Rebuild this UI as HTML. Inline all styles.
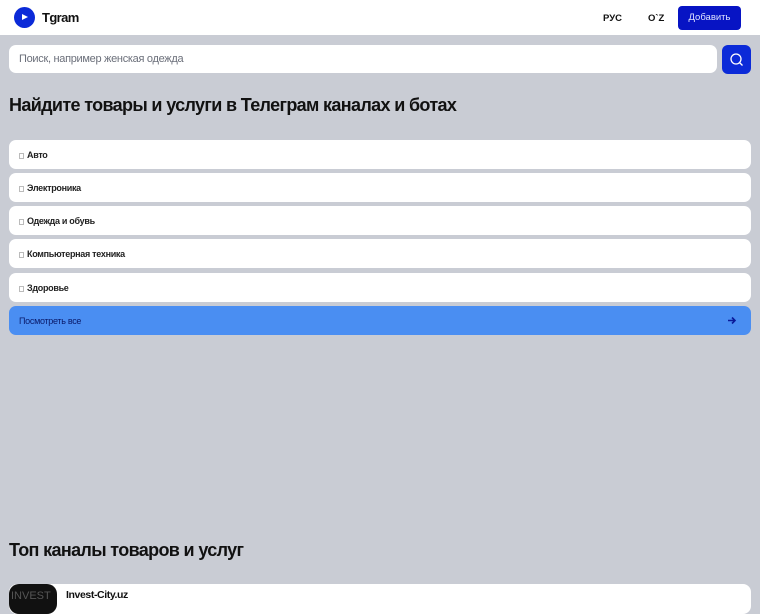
<!DOCTYPE html>
<html><head><meta charset="utf-8"><style>
*{box-sizing:border-box;margin:0;padding:0}
body{width:760px;height:600px;overflow:hidden;background:#c9ccd4;font-family:"Liberation Sans","Noto Sans CJK SC",sans-serif;color:#111}
.hdr{position:absolute;left:0;top:0;width:760px;height:35px;background:#fff}
.logo{position:absolute;left:14px;top:7px;width:21px;height:21px;border-radius:50%;background:#0b2ad8}
.logo:after{content:"";position:absolute;left:8px;top:7px;border-left:6px solid #fff;border-top:3.5px solid transparent;border-bottom:3.5px solid transparent}
.brand{position:absolute;left:42px;top:10px;font-weight:bold;font-size:13px;letter-spacing:-0.6px}
.lang{position:absolute;top:13px;font-size:9.5px;font-weight:bold}
.add{position:absolute;left:678px;top:6px;width:63px;height:24px;background:#0714c4;border-radius:4px;color:#dfe3ff;font-size:9.5px;text-align:center;line-height:24px}
.search{position:absolute;left:9px;top:45px;width:708px;height:28px;background:#fff;border-radius:7px;font-size:11px;color:#6b6f7a;padding:8px 10px;letter-spacing:-0.3px}
.sbtn{position:absolute;left:722px;top:45px;width:29px;height:29px;background:#0b2ad8;border-radius:6px}
h1{position:absolute;left:9px;top:95px;font-size:18px;font-weight:bold;letter-spacing:-0.65px;white-space:nowrap}
.it{position:absolute;left:9px;width:742px;height:29px;background:#fff;border-radius:7px;font-size:9px;font-weight:bold;padding:10px 10px 0;color:#222;letter-spacing:-0.3px}
.it span{display:inline-block;width:5px;height:6px;border:1px solid #bbb;margin-right:3px;vertical-align:-1px}
.all{background:#4a8ef2;color:#0a1a6a;font-weight:normal}
h2{position:absolute;left:9px;top:540px;font-size:18px;font-weight:bold;letter-spacing:-0.65px}
.card{position:absolute;left:9px;top:584px;width:742px;height:30px;background:#fff;border-radius:8px}
.av{position:absolute;left:9px;top:584px;width:48px;height:30px;background:#111;border-radius:10px;color:#555;font-size:11px;padding:6px 2px;overflow:hidden}
.cn{position:absolute;left:66px;top:589px;font-size:10.5px;font-weight:bold;letter-spacing:-0.4px}
</style></head><body>
<div class="hdr"><div class="logo"></div><div class="brand">Tgram</div>
<div class="lang" style="left:603px">РУС</div><div class="lang" style="left:648px">O`Z</div>
<div class="add">Добавить</div></div>
<div class="search">Поиск, например женская одежда</div>
<div class="sbtn"><svg width="29" height="29"><circle cx="14" cy="14" r="5" fill="none" stroke="#fff" stroke-width="1.3"/><path d="M17.5 17.5l3 3" stroke="#fff" stroke-width="1.3"/></svg></div>
<h1>Найдите товары и услуги в Телеграм каналах и ботах</h1>
<div class="it" style="top:140px"><span></span>Авто</div>
<div class="it" style="top:173px"><span></span>Электроника</div>
<div class="it" style="top:206px"><span></span>Одежда и обувь</div>
<div class="it" style="top:239px"><span></span>Компьютерная техника</div>
<div class="it" style="top:273px"><span></span>Здоровье</div>
<div class="it all" style="top:306px">Посмотреть все<svg style="position:absolute;right:14px;top:10px" width="9" height="9"><path d="M0 4.5h7M4 1.5l3 3-3 3" stroke="#0a1a9a" stroke-width="1.6" fill="none"/></svg></div>
<h2>Топ каналы товаров и услуг</h2>
<div class="card"></div><div class="av">INVEST</div><div class="cn">Invest-City.uz</div>
</body></html>
